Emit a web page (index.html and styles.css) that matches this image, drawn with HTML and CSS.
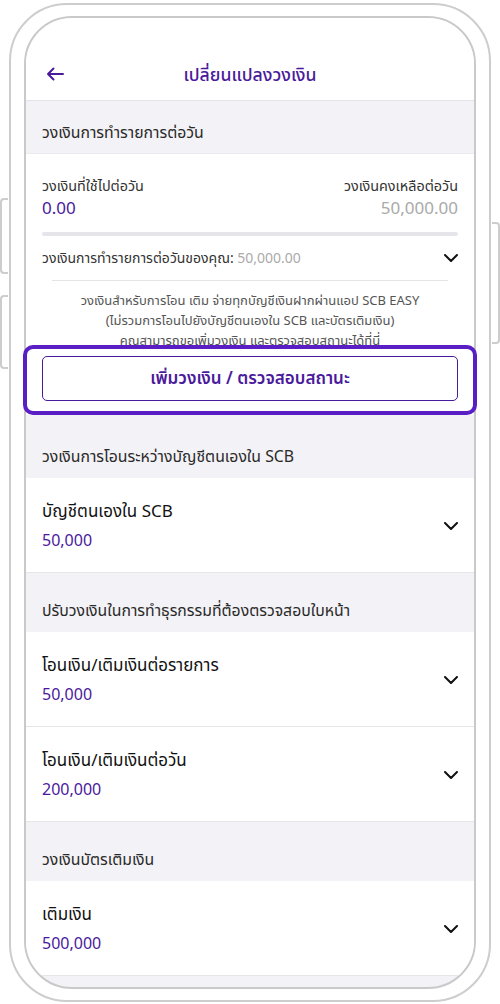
FILE: index.html
```html
<!DOCTYPE html>
<html lang="th">
<head>
  <meta charset="UTF-8">
  <meta name="viewport" content="width=device-width, initial-scale=1.0">
  <title>เปลี่ยนแปลงวงเงิน</title>
  <link rel="stylesheet" href="styles.css">
</head>
<body>

  <div class="phone">
    <span class="side-btn left-1"></span>
    <span class="side-btn left-2"></span>
    <span class="side-btn right-1"></span>

    <div class="screen">
      <header class="topbar">
        <span class="back">
          <svg width="18" height="14" viewBox="0 0 18 14">
            <path d="M17 7H2M7.5 1.5L2 7l5.5 5.5" fill="none" stroke="#4a1a9c" stroke-width="2" stroke-linecap="round" stroke-linejoin="round"/>
          </svg>
        </span>
        <h1>เปลี่ยนแปลงวงเงิน</h1>
      </header>

      <div class="section-title first">วงเงินการทำรายการต่อวัน</div>

      <div class="daily">
        <div class="daily-row">
          <div>
            <div class="lbl">วงเงินที่ใช้ไปต่อวัน</div>
            <div class="amt used">0.00</div>
          </div>
          <div class="right">
            <div class="lbl">วงเงินคงเหลือต่อวัน</div>
            <div class="amt left">50,000.00</div>
          </div>
        </div>
        <div class="bar"></div>
        <div class="your-limit">
          <span>วงเงินการทำรายการต่อวันของคุณ: <span class="muted">50,000.00</span></span>
          <svg class="chev" width="14" height="8" viewBox="0 0 14 8"><path d="M1 1l6 6 6-6" fill="none" stroke="#111" stroke-width="2" stroke-linecap="round" stroke-linejoin="round"/></svg>
        </div>
        <div class="divider"></div>
        <p class="note">
          วงเงินสำหรับการโอน เติม จ่ายทุกบัญชีเงินฝากผ่านแอป SCB EASY<br>
          (ไม่รวมการโอนไปยังบัญชีตนเองใน SCB และบัตรเติมเงิน)<br>
          คุณสามารถขอเพิ่มวงเงิน และตรวจสอบสถานะได้ที่นี่
        </p>
        <div class="cta">
          <button class="cta-btn">เพิ่มวงเงิน / ตรวจสอบสถานะ</button>
        </div>
      </div>

      <div class="section-title after-cta">วงเงินการโอนระหว่างบัญชีตนเองใน SCB</div>
      <div class="limit-row">
        <div>
          <div class="name">บัญชีตนเองใน SCB</div>
          <div class="value">50,000</div>
        </div>
        <svg class="chev" width="14" height="8" viewBox="0 0 14 8"><path d="M1 1l6 6 6-6" fill="none" stroke="#111" stroke-width="2" stroke-linecap="round" stroke-linejoin="round"/></svg>
      </div>

      <div class="section-title">ปรับวงเงินในการทำธุรกรรมที่ต้องตรวจสอบใบหน้า</div>
      <div class="limit-row">
        <div>
          <div class="name">โอนเงิน/เติมเงินต่อรายการ</div>
          <div class="value">50,000</div>
        </div>
        <svg class="chev" width="14" height="8" viewBox="0 0 14 8"><path d="M1 1l6 6 6-6" fill="none" stroke="#111" stroke-width="2" stroke-linecap="round" stroke-linejoin="round"/></svg>
      </div>
      <div class="limit-row">
        <div>
          <div class="name">โอนเงิน/เติมเงินต่อวัน</div>
          <div class="value">200,000</div>
        </div>
        <svg class="chev" width="14" height="8" viewBox="0 0 14 8"><path d="M1 1l6 6 6-6" fill="none" stroke="#111" stroke-width="2" stroke-linecap="round" stroke-linejoin="round"/></svg>
      </div>

      <div class="section-title">วงเงินบัตรเติมเงิน</div>
      <div class="limit-row">
        <div>
          <div class="name">เติมเงิน</div>
          <div class="value">500,000</div>
        </div>
        <svg class="chev" width="14" height="8" viewBox="0 0 14 8"><path d="M1 1l6 6 6-6" fill="none" stroke="#111" stroke-width="2" stroke-linecap="round" stroke-linejoin="round"/></svg>
      </div>
    </div>

    <!-- กรอบไฮไลต์ปุ่ม -->
    <div class="highlight"></div>
  </div>

</body>
</html>
```

FILE: styles.css
```css
body {
  margin: 0;
  background: #fff;
  font-family: "Noto Sans", "Noto Sans Thai", "Liberation Sans", sans-serif;
  color: #222;
}
.phone {
  position: relative;
  box-sizing: border-box;
  width: 482px;
  height: 999px;
  margin: 3px 0 0 9px;
  padding: 11px 13px;
  border: 2px solid #cdcdcd;
  border-radius: 58px;
  background: #fff;
}
.side-btn {
  position: absolute;
  width: 8px;
  border: 2px solid #cdcdcd;
  background: #fff;
  box-sizing: border-box;
}
.left-1, .left-2 {
  left: -11px;
  border-right: none;
  border-radius: 4px 0 0 4px;
}
.left-1 { top: 193px; height: 76px; }
.left-2 { top: 290px; height: 74px; }
.right-1 {
  right: -11px;
  top: 217px;
  height: 122px;
  border-left: none;
  border-radius: 0 4px 4px 0;
}
.screen {
  box-sizing: border-box;
  height: 100%;
  border: 2px solid #c9c9c9;
  border-radius: 48px;
  overflow: hidden;
  background: #f3f2f6;
}
.topbar {
  display: flex;
  align-items: center;
  justify-content: center;
  position: relative;
  height: 52px;
  padding-top: 30px;
  background: #fff;
  border-bottom: 1px solid #e4e3e8;
}
.back {
  position: absolute;
  left: 20px;
  bottom: 19px;
  display: flex;
}
.topbar h1 {
  margin: 0 0 -2px;
  font-size: 17.7px;
  font-weight: 500;
  color: #4a1a9c;
}
.section-title {
  padding: 27px 16px 12px;
  font-size: 15.8px;
  line-height: 20px;
  color: #2a2a2a;
  background: #f3f2f6;
}
.section-title.first {
  padding-top: 21px;
  padding-bottom: 11px;
}
.section-title.after-cta {
  padding-top: 31px;
}
.daily {
  background: #fff;
  padding: 22px 16px 14px;
  border-top: 1px solid #ebeaee;
}
.daily-row {
  display: flex;
  justify-content: space-between;
}
.daily-row .right {
  text-align: right;
}
.lbl {
  font-size: 14.4px;
  line-height: 20px;
  color: #333;
}
.amt {
  font-size: 17px;
  line-height: 24px;
}
.amt.used { color: #4a1a9c; }
.amt.left { color: #a9a9a9; }
.bar {
  height: 4px;
  margin-top: 12px;
  border-radius: 2px;
  background: #e6e5ea;
}
.your-limit {
  display: flex;
  justify-content: space-between;
  align-items: center;
  margin-top: 12px;
  font-size: 14px;
  line-height: 20px;
  color: #333;
}
.muted { color: #aaa; }
.divider {
  height: 1px;
  margin: 12px 10px 0;
  background: #e4e4e4;
}
.note {
  margin: 9px 0 0;
  font-size: 13px;
  line-height: 20px;
  text-align: center;
  color: #555;
}
.cta {
  margin-top: 6px;
}
.cta-btn {
  display: block;
  width: 100%;
  height: 45px;
  border: 1.5px solid #4a1a9c;
  border-radius: 5px;
  background: #fff;
  font-family: inherit;
  font-size: 17px;
  font-weight: 600;
  color: #4a1a9c;
}
.limit-row {
  display: flex;
  justify-content: space-between;
  align-items: center;
  padding: 22px 16px 21px;
  background: #fff;
  border-bottom: 1px solid #e6e6e6;
}
.name {
  font-size: 17px;
  line-height: 22px;
  color: #111;
}
.value {
  margin-top: 7px;
  font-size: 16px;
  line-height: 22px;
  color: #4a1a9c;
}
.highlight {
  position: absolute;
  left: 12px;
  top: 340px;
  width: 454px;
  height: 70px;
  box-sizing: border-box;
  border: 4.5px solid #5a1fc4;
  border-radius: 10px;
  pointer-events: none;
}
```
